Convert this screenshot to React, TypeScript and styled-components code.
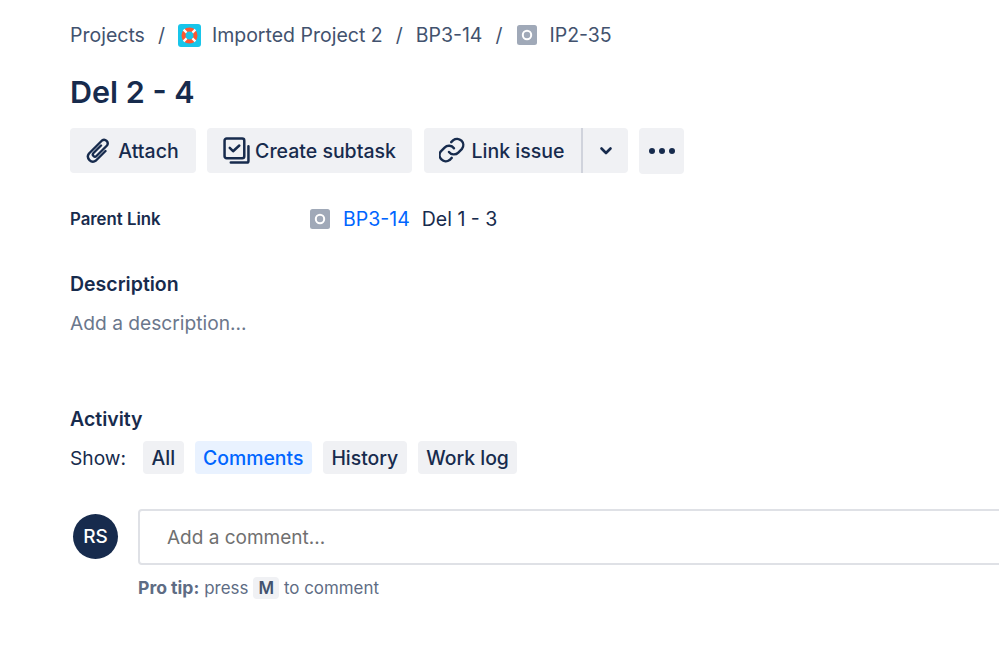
import styled, { createGlobalStyle } from "styled-components";

const GlobalStyle = createGlobalStyle`
  html, body {
    margin: 0;
    padding: 0;
    width: 999px;
    height: 656px;
    overflow: hidden;
    background: #fff;
    font-family: Inter, "Liberation Sans", sans-serif;
    color: #172b4d;
  }
`;

const Page = styled.div`
  display: flex;
  flex-direction: column;
  align-items: flex-start;
  padding: 20px 0 0 70px;
`;

const Breadcrumbs = styled.nav`
  display: flex;
  align-items: center;
  height: 30px;
  font-size: 19.5px;
  color: #42526e;
`;

const Slash = styled.span`
  margin: 0 13px;
`;

const CrumbIcon = styled.span<{ $lead?: number; $trail: number }>`
  display: flex;
  margin-left: ${(p) => p.$lead ?? 0}px;
  margin-right: ${(p) => p.$trail}px;
`;

const Title = styled.h1`
  margin: 17px 0 0;
  font-size: 30.5px;
  line-height: 50px;
  font-weight: 600;
  color: #172b4d;
`;

const Toolbar = styled.div`
  display: flex;
  align-items: flex-start;
  gap: 11px;
  margin-top: 11px;
`;

const ActionButton = styled.button<{ $width: number; $height?: number; $radius?: string; $inset?: number }>`
  display: flex;
  align-items: center;
  justify-content: center;
  gap: 5px;
  width: ${(p) => p.$width}px;
  height: ${(p) => p.$height ?? 45}px;
  padding: 0 ${(p) => p.$inset ?? 0}px 0 0;
  border: 0;
  border-radius: ${(p) => p.$radius ?? "4px"};
  background: #f0f1f4;
  color: #172b4d;
  font-family: inherit;
  font-size: 19.5px;
  font-weight: 500;
`;

const SplitGroup = styled.div`
  display: flex;
  margin-left: 1px;
`;

const SplitDivider = styled.span`
  width: 2px;
  height: 45px;
  background: #d0d3dc;
`;

const FieldRow = styled.div`
  display: flex;
  align-items: center;
  height: 26px;
  margin-top: 32px;
`;

const FieldLabel = styled.div`
  width: 240px;
  font-size: 16.8px;
  font-weight: 600;
`;

const FieldValue = styled.div`
  display: flex;
  align-items: center;
  font-size: 19.5px;
`;

const IssueLink = styled.a`
  margin: 0 12px 0 13px;
  color: #0065ff;
`;

const SectionTitle = styled.h2<{ $top: number }>`
  margin: ${(p) => p.$top}px 0 0;
  font-size: 19.5px;
  line-height: 26px;
  font-weight: 600;
`;

const Placeholder = styled.div`
  margin-top: 13px;
  font-size: 19.2px;
  line-height: 26px;
  color: #6b778c;
`;

const FilterRow = styled.div`
  display: flex;
  align-items: center;
  gap: 11px;
  margin-top: 9px;
`;

const ShowLabel = styled.span`
  margin-right: 6px;
  font-size: 19.2px;
`;

const FilterChip = styled.button<{ $active?: boolean }>`
  height: 33px;
  padding: 0 8.5px;
  border: 0;
  border-radius: 4px;
  background: ${(p) => (p.$active ? "#e9f2ff" : "#f0f1f4")};
  color: ${(p) => (p.$active ? "#0065ff" : "#172b4d")};
  font-family: inherit;
  font-size: 19.4px;
  font-weight: 500;
`;

const CommentRow = styled.div`
  display: flex;
  align-items: center;
  gap: 20px;
  margin: 35px 0 0 3px;
`;

const Avatar = styled.div`
  display: flex;
  align-items: center;
  justify-content: center;
  width: 45px;
  height: 45px;
  margin-bottom: 2px;
  border-radius: 50%;
  background: #172b4d;
  color: #fff;
  font-size: 19px;
  font-weight: 500;
`;

const CommentBox = styled.div`
  display: flex;
  align-items: center;
  box-sizing: border-box;
  width: 900px;
  height: 56px;
  padding-left: 27px;
  border: 2px solid #dfe1e6;
  border-radius: 4px;
  font-size: 19px;
  color: #707070;
`;

const ProTip = styled.div`
  display: flex;
  align-items: center;
  margin: 10px 0 0 68px;
  font-size: 16.9px;
  line-height: 26px;
  color: #5e6c84;
`;

const ProTipLead = styled.strong`
  margin-right: 5px;
  font-size: 17.6px;
  font-weight: 700;
`;

const KeyCap = styled.kbd`
  margin: 0 5px;
  padding: 0 5px;
  border-radius: 4px;
  background: #f0f1f4;
  font-family: inherit;
  font-weight: 600;
  line-height: 22px;
  color: #42526e;
`;

const ProjectIcon = () => (
  <svg width="23" height="23" viewBox="0 0 23 23">
    <rect width="23" height="23" rx="3" fill="#18c5ea" />
    <circle cx="11.5" cy="11.5" r="6" fill="none" stroke="#ff5630" strokeWidth="4" />
    <path d="M5.6 5.6l3 3M17.4 5.6l-3 3M5.6 17.4l3-3M17.4 17.4l-3-3" stroke="#fff" strokeWidth="2.2" />
  </svg>
);

const IssueIcon = () => (
  <svg width="20" height="20" viewBox="0 0 20 20">
    <rect width="20" height="20" rx="2.5" fill="#a0a9b8" />
    <circle cx="10" cy="10" r="4.2" fill="none" stroke="#fff" strokeWidth="2" />
  </svg>
);

const AttachIcon = () => (
  <svg width="28" height="28" viewBox="0 -1 28 28" fill="none" stroke="#172b4d" strokeWidth="2.4" strokeLinecap="round" strokeLinejoin="round">
    <path d="M16 7.5L8.5 15a2.1 2.1 0 0 0 3 3L22 7.5a3.6 3.6 0 0 0-5-5L4 15.5a5 5 0 0 0 7 7l9.5-9.5" />
  </svg>
);

const SubtaskIcon = () => (
  <svg width="27" height="27" viewBox="0 0 26 26" fill="none" stroke="#172b4d" strokeWidth="2.4" strokeLinecap="round" strokeLinejoin="round">
    <rect x="1.5" y="1.5" width="19" height="19" rx="2" />
    <path d="M6.5 10.5l3.2 3.2 6-5.5" />
    <path d="M24.5 9v14a1.6 1.6 0 0 1-1.6 1.6H7.5" />
  </svg>
);

const LinkIcon = () => (
  <svg width="28" height="28" viewBox="2 1.5 22.5 22.5" fill="none" stroke="#172b4d" strokeWidth="1.95" strokeLinecap="round" strokeLinejoin="round">
    <path d="M10 13.5a5 5 0 0 0 7.5.5l3-3a5 5 0 0 0-7-7l-1.7 1.7" />
    <path d="M14 10.5a5 5 0 0 0-7.5-.5l-3 3a5 5 0 0 0 7 7l1.7-1.7" />
  </svg>
);

const ChevronIcon = () => (
  <svg width="14" height="10" viewBox="0 0 14 10" fill="none" stroke="#172b4d" strokeWidth="2.6" strokeLinecap="round" strokeLinejoin="round">
    <path d="M2.5 2.5L7 7l4.5-4.5" />
  </svg>
);

const MoreIcon = () => (
  <svg width="28" height="8" viewBox="0 0 28 8" fill="#172b4d">
    <circle cx="4" cy="4" r="3" />
    <circle cx="14" cy="4" r="3" />
    <circle cx="24" cy="4" r="3" />
  </svg>
);

export default function App() {
  return (
    <>
      <GlobalStyle />
      <Page>
        <Breadcrumbs>
          <span>Projects</span>
          <Slash>/</Slash>
          <CrumbIcon $trail={11}>
            <ProjectIcon />
          </CrumbIcon>
          <span>Imported Project 2</span>
          <Slash>/</Slash>
          <span>BP3-14</span>
          <Slash>/</Slash>
          <CrumbIcon $lead={2} $trail={12}>
            <IssueIcon />
          </CrumbIcon>
          <span>IP2-35</span>
        </Breadcrumbs>
        <Title>Del 2 - 4</Title>
        <Toolbar>
          <ActionButton $width={126} $inset={2}>
            <AttachIcon />
            Attach
          </ActionButton>
          <ActionButton $width={205}>
            <SubtaskIcon />
            Create subtask
          </ActionButton>
          <SplitGroup>
            <ActionButton $width={157} $inset={2} $radius="4px 0 0 4px">
              <LinkIcon />
              Link issue
            </ActionButton>
            <SplitDivider />
            <ActionButton $width={45} $radius="0 4px 4px 0">
              <ChevronIcon />
            </ActionButton>
          </SplitGroup>
          <ActionButton $width={45} $height={46}>
            <MoreIcon />
          </ActionButton>
        </Toolbar>
        <FieldRow>
          <FieldLabel>Parent Link</FieldLabel>
          <FieldValue>
            <IssueIcon />
            <IssueLink>BP3-14</IssueLink>
            Del 1 - 3
          </FieldValue>
        </FieldRow>
        <SectionTitle $top={39}>Description</SectionTitle>
        <Placeholder>Add a description...</Placeholder>
        <SectionTitle $top={70}>Activity</SectionTitle>
        <FilterRow>
          <ShowLabel>Show:</ShowLabel>
          <FilterChip>All</FilterChip>
          <FilterChip $active>Comments</FilterChip>
          <FilterChip>History</FilterChip>
          <FilterChip>Work log</FilterChip>
        </FilterRow>
        <CommentRow>
          <Avatar>RS</Avatar>
          <CommentBox>Add a comment...</CommentBox>
        </CommentRow>
        <ProTip>
          <ProTipLead>Pro tip:</ProTipLead> press <KeyCap>M</KeyCap> to comment
        </ProTip>
      </Page>
    </>
  );
}
